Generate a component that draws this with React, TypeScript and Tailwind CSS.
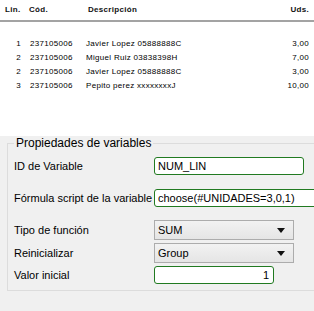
const rows = [
  { lin: '1', cod: '237105006', desc: 'Javier Lopez 05888888C', uds: '3,00' },
  { lin: '2', cod: '237105006', desc: 'Miguel Ruiz 03838398H', uds: '7,00' },
  { lin: '2', cod: '237105006', desc: 'Javier Lopez 05888888C', uds: '3,00' },
  { lin: '3', cod: '237105006', desc: 'Pepito perez xxxxxxxxJ', uds: '10,00' },
];

function Arrow() {
  return (
    <svg width="8" height="5" viewBox="0 0 8 5" className="mr-[8px]">
      <path d="M0 0h8L4 5z" fill="#111" />
    </svg>
  );
}

export default function App() {
  return (
    <div className="w-[314px] h-[311px] flex flex-col overflow-hidden bg-white font-['Liberation_Sans',Arial,sans-serif] text-black">
      {/* Table */}
      <div className="h-[136px] bg-white text-[8px] tracking-[0.3px]">
        <div className="h-[22px] flex items-center border-b-2 border-[#a3a3a3] font-bold text-[#111]">
          <span className="w-[29px] pl-[5px]">Lin.</span>
          <span className="w-[59px]">Cód.</span>
          <span className="flex-1">Descripción</span>
          <span className="pr-[5px]">Uds.</span>
        </div>
        <div className="pt-[15px]">
          {rows.map((r, i) => (
            <div key={i} className="h-[14px] flex items-center">
              <span className="w-[21px] text-right">{r.lin}</span>
              <span className="w-[65px] pl-[9px]">{r.cod}</span>
              <span className="flex-1">{r.desc}</span>
              <span className="pr-[5px]">{r.uds}</span>
            </div>
          ))}
        </div>
      </div>

      {/* Properties panel */}
      <div className="flex-1 bg-[#f0f0f0] text-[11px]">
        <fieldset className="ml-[7px] w-[330px] border border-[#dcdcdc] pl-[6px] pb-[6px]">
          <legend className="px-[2px] h-[14px] leading-[14px] text-[12px]">Propiedades de variables</legend>
          <div className="flex items-center mt-[7px]">
            <span className="w-[140px]">ID de Variable</span>
            <div className="w-[150px] h-[18px] bg-white border border-[#217a21] rounded-[3px] pl-[3px] flex items-center">NUM_LIN</div>
          </div>
          <div className="flex items-center mt-[14px]">
            <span className="w-[140px]">Fórmula script de la variable</span>
            <div className="w-[170px] h-[18px] bg-white border border-[#217a21] rounded-l-[3px] pl-[3px] flex items-center">choose(#UNIDADES=3,0,1)</div>
          </div>
          <div className="flex items-center mt-[13px]">
            <span className="w-[140px]">Tipo de función</span>
            <div className="w-[140px] h-[20px] bg-gradient-to-b from-[#f2f2f2] to-[#e5e5e5] border border-[#acacac] pl-[3px] flex items-center justify-between">
              SUM
              <Arrow />
            </div>
          </div>
          <div className="flex items-center mt-[3px]">
            <span className="w-[140px]">Reinicializar</span>
            <div className="w-[140px] h-[20px] bg-gradient-to-b from-[#f2f2f2] to-[#e5e5e5] border border-[#acacac] pl-[3px] flex items-center justify-between">
              Group
              <Arrow />
            </div>
          </div>
          <div className="flex items-center mt-[3px]">
            <span className="w-[140px]">Valor inicial</span>
            <div className="w-[120px] h-[18px] bg-white border border-[#217a21] rounded-[3px] pr-[4px] flex items-center justify-end">1</div>
          </div>
        </fieldset>
      </div>
    </div>
  );
}
